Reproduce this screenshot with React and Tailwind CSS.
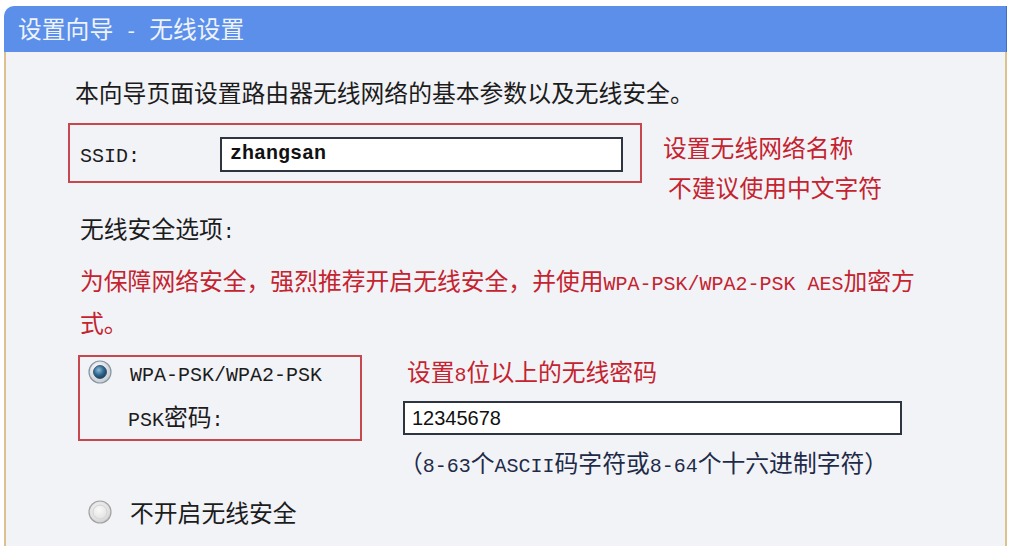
import React from 'react';

// half-width latin run, sized so one glyph is half a CJK cell
const L = ({ children, className = '' }) => (
    <span className={`font-['Liberation_Mono',monospace] text-[0.84em] whitespace-pre ${className}`}>{children}</span>
);

const RadioOn = () => (
    <svg width="24" height="24" viewBox="0 0 24 24">
        <defs>
            <radialGradient id="ringOn" cx="40%" cy="35%" r="70%">
                <stop offset="0%" stopColor="#ffffff" />
                <stop offset="100%" stopColor="#c2c9d0" />
            </radialGradient>
            <radialGradient id="dotOn" cx="40%" cy="35%" r="70%">
                <stop offset="0%" stopColor="#8fbcd8" />
                <stop offset="55%" stopColor="#2f6890" />
                <stop offset="100%" stopColor="#143a56" />
            </radialGradient>
        </defs>
        <circle cx="12" cy="12" r="11" fill="url(#ringOn)" stroke="#8896a2" strokeWidth="1.2" />
        <circle cx="12" cy="12" r="6.5" fill="url(#dotOn)" stroke="#24465e" strokeWidth="0.8" />
    </svg>
);

const RadioOff = () => (
    <svg width="24" height="24" viewBox="0 0 24 24">
        <defs>
            <radialGradient id="ringOff" cx="45%" cy="40%" r="65%">
                <stop offset="0%" stopColor="#fafafa" />
                <stop offset="70%" stopColor="#e0e0e0" />
                <stop offset="100%" stopColor="#c2c2c2" />
            </radialGradient>
        </defs>
        <circle cx="12" cy="12" r="11" fill="url(#ringOff)" stroke="#a2a2a2" strokeWidth="1.2" />
        <circle cx="12" cy="12" r="7" fill="none" stroke="#d4d4d4" strokeWidth="1" />
    </svg>
);

export default function App() {
    return (
        <div className="w-[1020px] h-[546px] bg-white pt-[6px] pl-[4px] pr-[13px] overflow-hidden font-['Noto_Sans_CJK_SC',sans-serif] text-[23.8px] text-[#1c1c1c]">
            <div className="h-full flex flex-col rounded-tl-[10px] overflow-hidden">

                {/* title bar */}
                <div className="h-[46px] shrink-0 bg-[#5b8fea] border-r border-[#3f6fc4] flex items-center pl-[14px] text-[#eef3fc] leading-none">
                    <span>设置向导<L> - </L>无线设置</span>
                </div>

                {/* body */}
                <div className="flex-1 bg-[#f2f3f7] border-l-2 border-r-2 border-[#dcc08e] pl-[62px] pt-[24px]">

                    <p className="ml-[7px] leading-[32px]">本向导页面设置路由器无线网络的基本参数以及无线安全。</p>

                    {/* SSID */}
                    <div className="mt-[15px] flex items-start">
                        <div className="w-[574px] h-[60px] border-2 border-[#c8474f] flex items-center pl-[10px] pr-[17px]">
                            <span className="w-[140px] shrink-0"><L>SSID:</L></span>
                            <div className="flex-1 h-[35px] mt-[2px] border-2 border-[#2e3540] bg-white flex items-center pl-[8px]">
                                <L className="font-bold text-[#111]">zhangsan</L>
                            </div>
                        </div>
                        <div className="ml-[21px] mt-[4px] text-[#c4232f] leading-[40px]">
                            <div>设置无线网络名称</div>
                            <div className="ml-[5px]">不建议使用中文字符</div>
                        </div>
                    </div>

                    <p className="mt-[5px] ml-[12px] leading-[32px]">无线安全选项<L>:</L></p>

                    <p className="mt-[12px] ml-[12px] leading-[37px] text-[#c4232f]">
                        为保障网络安全，强烈推荐开启无线安全，并使用<L>WPA-PSK/WPA2-PSK AES</L>加密方
                        <br />
                        式。
                    </p>

                    {/* WPA */}
                    <div className="mt-[15px] flex items-start">
                        <div className="ml-[10px] w-[284px] h-[86px] border-2 border-[#c8474f] pl-[8px]">
                            <div className="h-[30px] flex items-center">
                                <RadioOn />
                                <span className="ml-[18px]"><L>WPA-PSK/WPA2-PSK</L></span>
                            </div>
                            <div className="mt-[15px] h-[30px] flex items-center pl-[40px]">
                                <span><L>PSK</L>密码<L>:</L></span>
                            </div>
                        </div>
                        <div className="ml-[41px] mt-[2px]">
                            <div className="h-[30px] flex items-center ml-[4px] text-[#c4232f]">
                                <span>设置<L>8</L>位以上的无线密码</span>
                            </div>
                            <div className="mt-[14px] w-[499px] h-[34px] border-2 border-[#2e3540] bg-white flex items-center pl-[7px] font-['Liberation_Sans',sans-serif] text-[20px] text-[#111]">
                                12345678
                            </div>
                            <div className="mt-[13px] h-[30px] flex items-center -ml-[4px] text-[#1e2b48]">
                                <span>（<L>8-63</L>个<L>ASCII</L>码字符或<L>8-64</L>个十六进制字符）</span>
                            </div>
                        </div>
                    </div>

                    {/* no security */}
                    <div className="mt-[19px] ml-[20px] h-[30px] flex items-center">
                        <RadioOff />
                        <span className="ml-[18px]">不开启无线安全</span>
                    </div>
                </div>
            </div>
        </div>
    );
}
